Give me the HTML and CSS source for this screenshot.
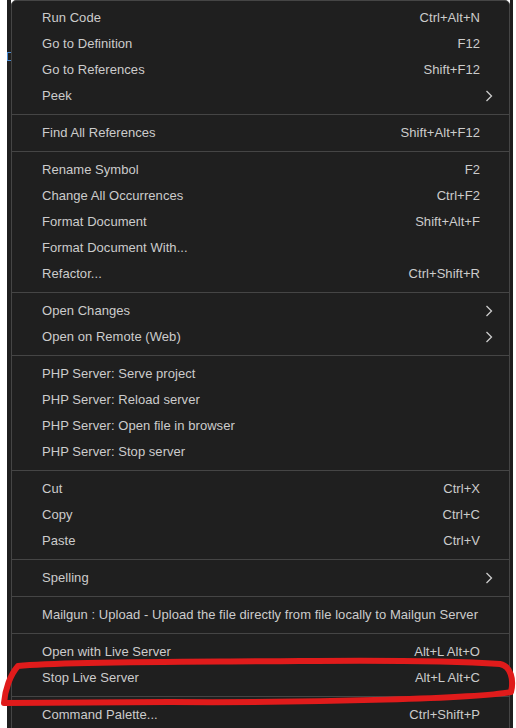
FILE: index.html
```html
<!DOCTYPE html>
<html>
<head>
<meta charset="utf-8">
<link rel="stylesheet" href="styles.css">
</head>
<body>
<div class="page">
  <div class="edge"><span class="tick"></span></div>
  <div class="menu">
    <div class="item"><span class="label">Run Code</span><span class="key">Ctrl+Alt+N</span></div>
    <div class="item"><span class="label">Go to Definition</span><span class="key">F12</span></div>
    <div class="item"><span class="label">Go to References</span><span class="key">Shift+F12</span></div>
    <div class="item"><span class="label">Peek</span><span class="key"></span><span class="sub"><svg viewBox="0 0 8 12" width="8" height="12"><path d="M1.5 1 L6.5 6 L1.5 11" fill="none" stroke="#cccccc" stroke-width="1.3"/></svg></span></div>
    <div class="sep"></div>
    <div class="item"><span class="label">Find All References</span><span class="key">Shift+Alt+F12</span></div>
    <div class="sep"></div>
    <div class="item"><span class="label">Rename Symbol</span><span class="key">F2</span></div>
    <div class="item"><span class="label">Change All Occurrences</span><span class="key">Ctrl+F2</span></div>
    <div class="item"><span class="label">Format Document</span><span class="key">Shift+Alt+F</span></div>
    <div class="item"><span class="label">Format Document With...</span><span class="key"></span></div>
    <div class="item"><span class="label">Refactor...</span><span class="key">Ctrl+Shift+R</span></div>
    <div class="sep"></div>
    <div class="item"><span class="label">Open Changes</span><span class="key"></span><span class="sub"><svg viewBox="0 0 8 12" width="8" height="12"><path d="M1.5 1 L6.5 6 L1.5 11" fill="none" stroke="#cccccc" stroke-width="1.3"/></svg></span></div>
    <div class="item"><span class="label">Open on Remote (Web)</span><span class="key"></span><span class="sub"><svg viewBox="0 0 8 12" width="8" height="12"><path d="M1.5 1 L6.5 6 L1.5 11" fill="none" stroke="#cccccc" stroke-width="1.3"/></svg></span></div>
    <div class="sep"></div>
    <div class="item"><span class="label">PHP Server: Serve project</span><span class="key"></span></div>
    <div class="item"><span class="label">PHP Server: Reload server</span><span class="key"></span></div>
    <div class="item"><span class="label">PHP Server: Open file in browser</span><span class="key"></span></div>
    <div class="item"><span class="label">PHP Server: Stop server</span><span class="key"></span></div>
    <div class="sep"></div>
    <div class="item"><span class="label">Cut</span><span class="key">Ctrl+X</span></div>
    <div class="item"><span class="label">Copy</span><span class="key">Ctrl+C</span></div>
    <div class="item"><span class="label">Paste</span><span class="key">Ctrl+V</span></div>
    <div class="sep"></div>
    <div class="item"><span class="label">Spelling</span><span class="key"></span><span class="sub"><svg viewBox="0 0 8 12" width="8" height="12"><path d="M1.5 1 L6.5 6 L1.5 11" fill="none" stroke="#cccccc" stroke-width="1.3"/></svg></span></div>
    <div class="sep"></div>
    <div class="item"><span class="label">Mailgun : Upload - Upload the file directly from file locally to Mailgun Server</span><span class="key"></span></div>
    <div class="sep"></div>
    <div class="item"><span class="label">Open with Live Server</span><span class="key">Alt+L Alt+O</span></div>
    <div class="item"><span class="label">Stop Live Server</span><span class="key">Alt+L Alt+C</span></div>
    <div class="sep"></div>
    <div class="item"><span class="label">Command Palette...</span><span class="key">Ctrl+Shift+P</span></div>
  </div>
  <div class="edge-r"></div>
  <svg class="mark" viewBox="0 0 516 728" width="516" height="728">
    <path d="M18 666 C 70 661, 200 662, 300 661 S 470 662, 500 664 C 511 666, 514 680, 511 692 C 480 698, 320 703, 170 702 C 100 702, 40 703, 4 703 C 5 690, 10 675, 18 666 Z" fill="none" stroke="#e01b1b" stroke-width="6" stroke-linejoin="round"/>
  </svg>
</div>
</body>
</html>
```
FILE: styles.css
```css
html, body {
  margin: 0;
  padding: 0;
  background: #ffffff;
  overflow: hidden;
}
.page {
  position: relative;
  display: flex;
  width: 516px;
  height: 728px;
  overflow: hidden;
}
.edge {
  width: 4px;
  margin-left: 7px;
  background: #1f1f1f;
  position: relative;
}
.tick {
  position: absolute;
  left: 0;
  top: 52px;
  width: 3px;
  height: 7px;
  border-top: 1px solid #4a8ad0;
  border-bottom: 1px solid #4a8ad0;
  border-left: 1px solid #4a8ad0;
}
.edge-r {
  width: 3px;
  background: #1f1f1f;
}
.menu {
  width: 497px;
  padding: 4px 0;
  background: #1f1f1f;
  border: 1px solid #454545;
  border-radius: 5px 5px 0 0;
  font-family: "Liberation Sans", Arial, sans-serif;
  font-size: 13px;
  letter-spacing: 0.05px;
  color: #cccccc;
  align-self: flex-start;
  height: 760px;
}
.item {
  display: grid;
  grid-template-columns: 30px 1fr auto 29px;
  height: 26px;
  line-height: 26px;
  white-space: nowrap;
}
.label {
  grid-column: 2;
}
.key {
  grid-column: 3;
  text-align: right;
}
.sub {
  grid-column: 4;
  display: flex;
  align-items: center;
  padding-left: 5px;
}
.sep {
  height: 1px;
  margin: 5px 0;
  background: #454545;
}
.mark {
  position: absolute;
  left: 0;
  top: 0;
  pointer-events: none;
}
```
